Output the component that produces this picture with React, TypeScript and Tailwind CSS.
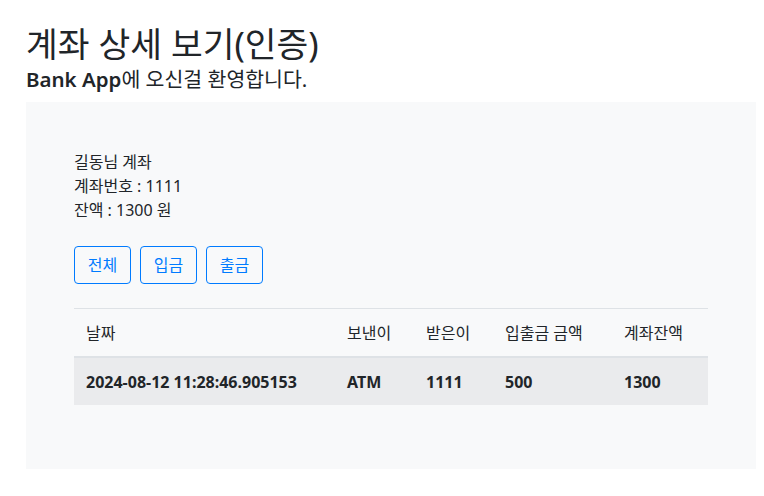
import React from 'react';

const rows = [
  { date: '2024-08-12 11:28:46.905153', from: 'ATM', to: '1111', amount: '500', balance: '1300' },
];

export default function App() {
  return (
    <div
      className="min-h-screen bg-white text-[#212529] px-[26px] pt-[23px]"
      style={{ fontFamily: '"Noto Sans", "Noto Sans CJK KR", sans-serif' }}
    >
      <h2 className="text-[34.5px] leading-[1.2] mb-[3px]">계좌 상세 보기(인증)</h2>
      <h5 className="text-[20.5px] leading-[1.2] mb-[10px]">
        <span className="font-semibold">Bank App</span>에 오신걸 환영합니다.
      </h5>

      <div className="bg-[#f8f9fa] p-[48px] pb-[64px] w-[730px]">
        {/* account info */}
        <div className="text-[16px] leading-[24px]">
          <div>길동님 계좌</div>
          <div>계좌번호 : 1111</div>
          <div>잔액 : 1300 원</div>
        </div>

        <div className="flex gap-[9px] mt-[24px] mb-[24px]">
          {['전체', '입금', '출금'].map(label => (
            <button
              key={label}
              className="h-[38px] w-[57px] border border-[#007bff] text-[#007bff] rounded-[4px] text-[16px] bg-transparent"
            >
              {label}
            </button>
          ))}
        </div>

        <table className="w-full border-collapse text-[16px]">
          <thead>
            <tr className="border-t border-[#dee2e6] border-b-2">
              <th className="w-[261px] text-left font-normal px-[12px] h-[49px]">날짜</th>
              <th className="w-[79px] text-left font-normal px-[12px]">보낸이</th>
              <th className="w-[79px] text-left font-normal px-[12px]">받은이</th>
              <th className="w-[119px] text-left font-normal px-[12px]">입출금 금액</th>
              <th className="text-left font-normal px-[12px]">계좌잔액</th>
            </tr>
          </thead>
          <tbody>
            {rows.map(r => (
              <tr key={r.date} className="bg-[#eaebed] font-bold">
                <td className="px-[12px] h-[48px]">{r.date}</td>
                <td className="px-[12px]">{r.from}</td>
                <td className="px-[12px]">{r.to}</td>
                <td className="px-[12px]">{r.amount}</td>
                <td className="px-[12px]">{r.balance}</td>
              </tr>
            ))}
          </tbody>
        </table>
      </div>
    </div>
  );
}
